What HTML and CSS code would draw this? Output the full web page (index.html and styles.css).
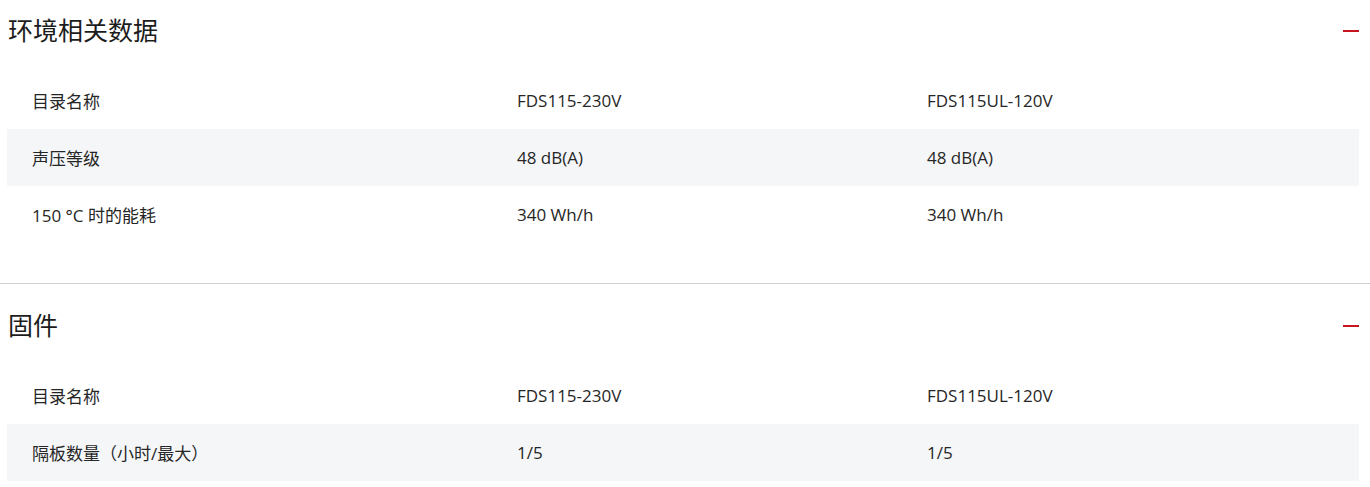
FILE: index.html
```html
<!DOCTYPE html>
<html lang="zh-CN">
<head>
<meta charset="utf-8">
<title>环境相关数据</title>
<link rel="stylesheet" href="styles.css">
</head>
<body>
<div class="page">
  <section class="section first">
    <div class="section-head">
      <h2 class="section-title">环境相关数据</h2>
      <span class="collapse" aria-label="收起"></span>
    </div>
    <div class="table">
      <div class="row">
        <div class="cell">目录名称</div>
        <div class="cell">FDS115-230V</div>
        <div class="cell">FDS115UL-120V</div>
      </div>
      <div class="row alt">
        <div class="cell">声压等级</div>
        <div class="cell">48 dB(A)</div>
        <div class="cell">48 dB(A)</div>
      </div>
      <div class="row">
        <div class="cell">150 °C 时的能耗</div>
        <div class="cell">340 Wh/h</div>
        <div class="cell">340 Wh/h</div>
      </div>
    </div>
  </section>
  <section class="section">
    <div class="section-head">
      <h2 class="section-title">固件</h2>
      <span class="collapse" aria-label="收起"></span>
    </div>
    <div class="table">
      <div class="row">
        <div class="cell">目录名称</div>
        <div class="cell">FDS115-230V</div>
        <div class="cell">FDS115UL-120V</div>
      </div>
      <div class="row alt">
        <div class="cell">隔板数量（小时/最大）</div>
        <div class="cell">1/5</div>
        <div class="cell">1/5</div>
      </div>
    </div>
  </section>
</div>
</body>
</html>
```

FILE: styles.css
```css
html, body {
  margin: 0;
  padding: 0;
  background: #ffffff;
}

body {
  font-family: "Open Sans", "Noto Sans CJK SC", sans-serif;
  color: #262626;
  overflow: hidden;
}

.section {
  border-bottom: 1px solid #cfcfcf;
  padding-bottom: 40px;
}

.section.first {
  margin-top: -11px;
}

.section-head {
  height: 83px;
  display: flex;
  align-items: center;
  justify-content: space-between;
  padding: 0 11px 0 8px;
}

.section-title {
  margin: 0;
  font-size: 25px;
  font-weight: 400;
  color: #1c1c1c;
  line-height: 1;
}

.collapse {
  display: block;
  width: 16px;
  height: 2px;
  background: #c8141e;
}

.table {
  margin: 0 11px 0 7px;
}

.row {
  display: grid;
  grid-template-columns: 485px 410px 1fr;
  height: 57px;
  align-items: center;
  font-size: 17px;
}

.row.alt {
  background: #f5f6f8;
}

.cell {
  padding-left: 25px;
  white-space: nowrap;
}
```
